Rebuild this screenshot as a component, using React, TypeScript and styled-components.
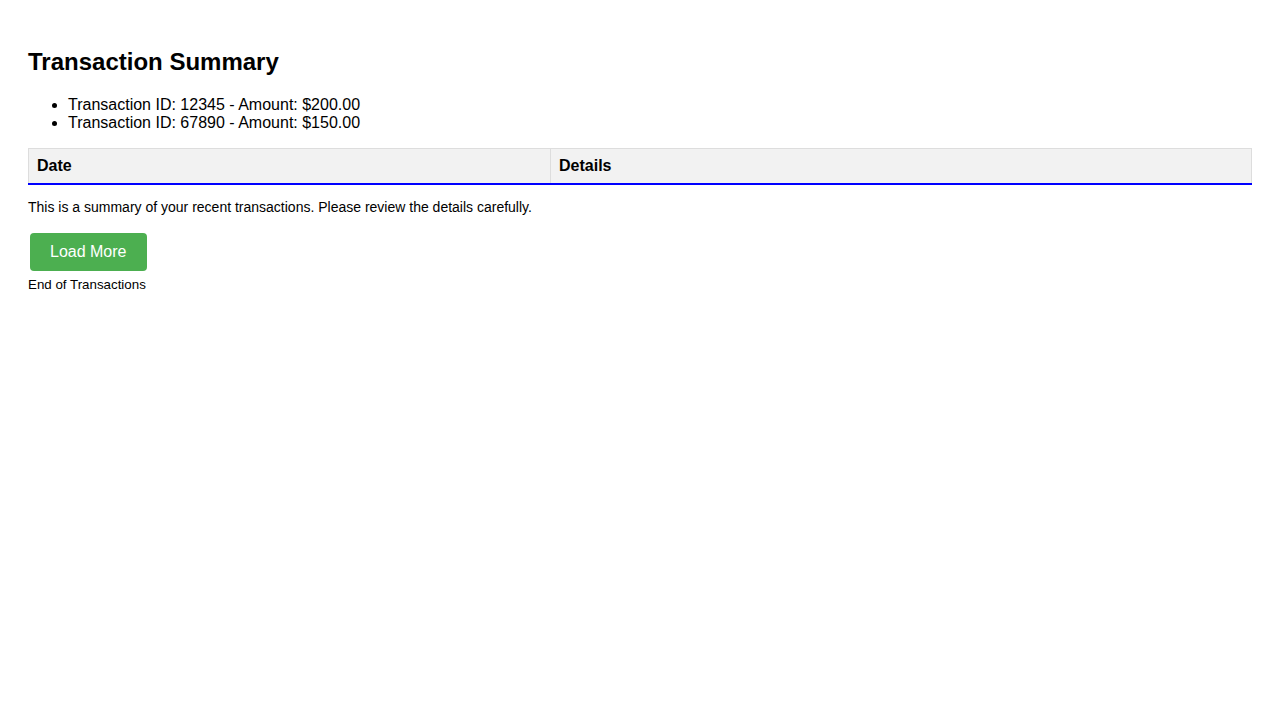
import React from "react";
import styled, { createGlobalStyle } from "styled-components";

const GlobalStyle = createGlobalStyle`
  body {
    margin: 8px;
    font-family: "Liberation Sans", Arial, sans-serif;
    color: #000;
    background: #fff;
  }
`;

const transactions = [
  { id: "12345", amount: "$200.00" },
  { id: "67890", amount: "$150.00" },
];

const App = () => {
  return (
    <>
      <GlobalStyle />
      <Page>
        <Title>Transaction Summary</Title>
        <List>
          {transactions.map((t) => (
            <li key={t.id}>
              Transaction ID: {t.id} - Amount: {t.amount}
            </li>
          ))}
        </List>
        <Table>
          <thead>
            <tr>
              <HeadCell width="522px">Date</HeadCell>
              <HeadCell>Details</HeadCell>
            </tr>
          </thead>
        </Table>
        <Note>
          This is a summary of your recent transactions. Please review the
          details carefully.
        </Note>
        <LoadButton type="button">Load More</LoadButton>
        <Footer>End of Transactions</Footer>
      </Page>
    </>
  );
};

export default App;

const Page = styled.div`
  padding: 20px;
`;

const Title = styled.h2`
  font-size: 24px;
  font-weight: bold;
  margin: 20px 0;
`;

const List = styled.ul`
  font-size: 16px;
  margin: 0 0 16px;
  padding-left: 40px;
`;

const Table = styled.table`
  width: 100%;
  border-collapse: collapse;
`;

const HeadCell = styled.th<{ width?: string }>`
  width: ${(p) => p.width || "auto"};
  box-sizing: border-box;
  text-align: left;
  font-size: 16px;
  padding: 8px;
  background: #f2f2f2;
  border: 1px solid #ddd;
  border-bottom: 2px solid blue;
`;

const Note = styled.p`
  font-size: 14px;
  margin: 14px 0;
`;

const LoadButton = styled.button`
  display: block;
  margin: 18px 2px 6px;
  padding: 10px 20px;
  background: #4caf50;
  color: #fff;
  border: none;
  border-radius: 4px;
  font-family: "Liberation Sans", Arial, sans-serif;
  font-size: 16px;
  line-height: 18px;
  cursor: pointer;
`;

const Footer = styled.div`
  font-size: 13.33px;
`;
